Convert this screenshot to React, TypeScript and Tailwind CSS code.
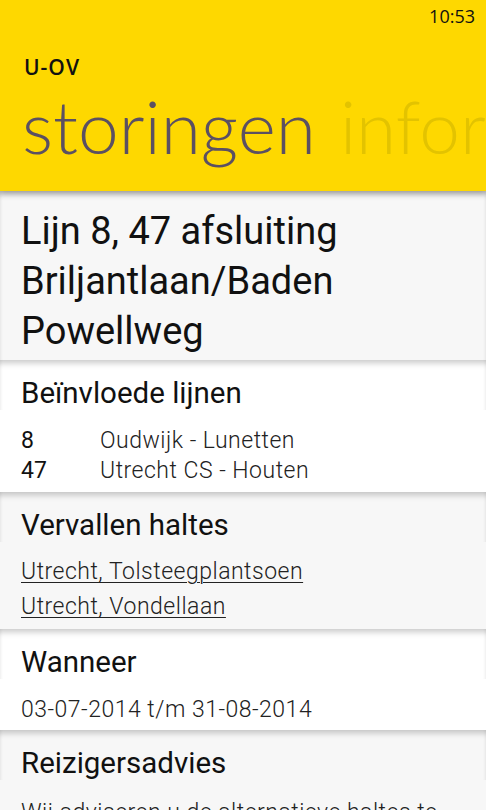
const lines = [
  { nr: "8", route: "Oudwijk - Lunetten" },
  { nr: "47", route: "Utrecht CS - Houten" },
];

const haltes = ["Utrecht, Tolsteegplantsoen", "Utrecht, Vondellaan"];

// top shadow + faint side shading of each section heading
const bandShadow =
  "shadow-[inset_0_7px_6px_-4px_rgba(0,0,0,0.22),inset_3px_0_3px_-2px_rgba(0,0,0,0.05),inset_-3px_0_3px_-2px_rgba(0,0,0,0.05)]";

function Heading({ title, gray }: { title: string; gray: boolean }) {
  return (
    <div
      className={`h-[50px] px-[21px] pt-[17px] text-[29.5px] leading-[32px] text-[#111] ${gray ? "bg-[#f7f7f7]" : "bg-white"} ${bandShadow}`}
    >
      {title}
    </div>
  );
}

export default function App() {
  return (
    <div
      className="w-[486px] h-[810px] overflow-hidden bg-white"
      style={{ fontFamily: "Roboto, 'Liberation Sans', sans-serif" }}
    >
      {/* Yellow pivot header */}
      <header className="relative z-10 h-[191px] bg-[#fed800] shadow-[0_2px_6px_rgba(0,0,0,0.25)] overflow-hidden">
        <div className="flex justify-end pt-[3px] pr-[11px] font-['Open_Sans',sans-serif] text-[18px] text-[#111]">
          10:53
        </div>
        <div className="pl-[24px] pt-[25px] font-['Open_Sans',sans-serif] font-semibold text-[21px] leading-[24px] tracking-[1px] text-[#111]">
          U-OV
        </div>
        <div className="flex gap-[24px] pl-[22px] mt-[7px] whitespace-nowrap font-['Lato',sans-serif] font-light text-[73px] leading-[80px]">
          <span className="text-[#5b5062]">storingen</span>
          <span className="text-[#e3c300]">informatie</span>
        </div>
      </header>

      {/* Title */}
      <section
        className={`bg-[#f7f7f7] h-[169px] px-[21px] pt-[15px] text-[38px] leading-[50px] text-[#111] ${bandShadow}`}
      >
        Lijn 8, 47 afsluiting Briljantlaan/Baden Powellweg
      </section>

      {/* Beïnvloede lijnen */}
      <section>
        <Heading title="Beïnvloede lijnen" gray={false} />
        <div className="bg-white h-[82px] px-[21px] pt-[16px] text-[23px] leading-[30px] tracking-[0.5px] text-[#222]">
          {lines.map((l) => (
            <div key={l.nr} className="flex">
              <span className="w-[79px] font-normal tracking-normal text-[#111]">{l.nr}</span>
              <span className="font-light">{l.route}</span>
            </div>
          ))}
        </div>
      </section>

      {/* Vervallen haltes */}
      <section>
        <Heading title="Vervallen haltes" gray={true} />
        <div className="bg-[#f7f7f7] h-[87px] px-[21px] pt-[12px] text-[23px] leading-[35px] tracking-[0.5px] font-light text-[#222]">
          {haltes.map((h) => (
            <div key={h}>
              <span className="underline underline-offset-[3px] decoration-1">{h}</span>
            </div>
          ))}
        </div>
      </section>

      {/* Wanneer */}
      <section>
        <Heading title="Wanneer" gray={false} />
        <div className="bg-white h-[51px] px-[21px] pt-[16px] text-[23px] leading-[30px] tracking-[0.5px] font-light text-[#222]">
          03-07-2014 t/m 31-08-2014
        </div>
      </section>

      {/* Reizigersadvies */}
      <section>
        <Heading title="Reizigersadvies" gray={true} />
        <div className="bg-[#f7f7f7] px-[21px] pt-[18px] text-[23px] leading-[30px] tracking-[0.5px] font-light text-[#222]">
          Wij adviseren u de alternatieve haltes te gebruiken.
        </div>
      </section>
    </div>
  );
}
